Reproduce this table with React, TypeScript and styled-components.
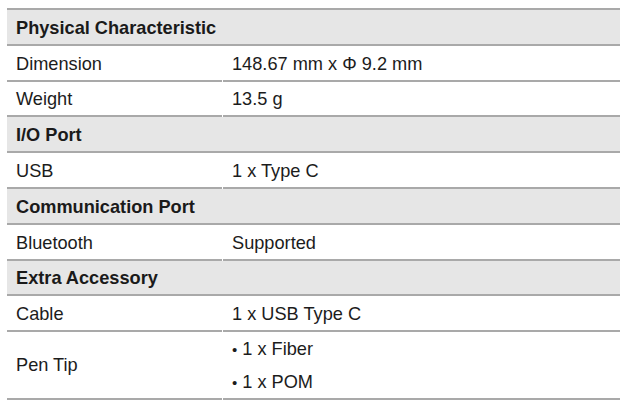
import React from "react";
import styled, { createGlobalStyle } from "styled-components";

const Global = createGlobalStyle`
  html, body { margin: 0; padding: 0; background: #ffffff; }
  body { font-family: "Liberation Sans", Arial, sans-serif; color: #1c1c1c; }
`;

const Page = styled.div`
  padding: 8px 0 0 7px;
  width: 620px;
  height: 405px;
  box-sizing: border-box;
  overflow: hidden;
`;

const Table = styled.div`
  width: 613px;
  border-top: 2px solid #a9a9a9;
  display: flex;
  flex-direction: column;
`;

const SectionRow = styled.div`
  height: 33.8px;
  box-sizing: border-box;
  display: flex;
  align-items: center;
  padding: 3px 0 0 9px;
  background: #e6e6e6;
  border-bottom: 2px solid #a9a9a9;
  font-weight: bold;
  font-size: 18.2px;
  color: #1a1a1a;
  box-sizing: content-box;
  height: 30.8px;
`;

const DataRow = styled.div`
  display: grid;
  grid-template-columns: 215px 1fr;
  column-gap: 1px;
`;

const Cell = styled.div<{ $lines?: number }>`
  height: ${(p) => ((p.$lines ?? 1) > 1 ? 64.6 : 31)}px;
  padding-top: ${(p) => ((p.$lines ?? 1) > 1 ? 1.5 : 2.8)}px;
  display: flex;
  flex-direction: column;
  justify-content: center;
  padding-left: 9px;
  border-bottom: 2px solid #a9a9a9;
  font-size: 18.2px;
  color: #1c1c1c;
`;

const Bullet = styled.div`
  height: 33px;
  display: flex;
  align-items: center;
  &::before {
    content: "•";
    font-size: 15px;
    margin-right: 5px;
  }
`;

type Item =
  | { kind: "section"; title: string }
  | { kind: "data"; label: string; value: string | string[] };

const rows: Item[] = [
  { kind: "section", title: "Physical Characteristic" },
  { kind: "data", label: "Dimension", value: "148.67 mm x Φ 9.2 mm" },
  { kind: "data", label: "Weight", value: "13.5 g" },
  { kind: "section", title: "I/O Port" },
  { kind: "data", label: "USB", value: "1 x Type C" },
  { kind: "section", title: "Communication Port" },
  { kind: "data", label: "Bluetooth", value: "Supported" },
  { kind: "section", title: "Extra Accessory" },
  { kind: "data", label: "Cable", value: "1 x USB Type C" },
  { kind: "data", label: "Pen Tip", value: ["1 x Fiber", "1 x POM"] },
];

export default function App() {
  return (
    <>
      <Global />
      <Page>
        <Table>
          {rows.map((r, i) =>
            r.kind === "section" ? (
              <SectionRow key={i}>{r.title}</SectionRow>
            ) : Array.isArray(r.value) ? (
              <DataRow key={i}>
                <Cell $lines={2}>{r.label}</Cell>
                <Cell $lines={2}>
                  {r.value.map((v) => (
                    <Bullet key={v}>{v}</Bullet>
                  ))}
                </Cell>
              </DataRow>
            ) : (
              <DataRow key={i}>
                <Cell>{r.label}</Cell>
                <Cell>{r.value}</Cell>
              </DataRow>
            )
          )}
        </Table>
      </Page>
    </>
  );
}
